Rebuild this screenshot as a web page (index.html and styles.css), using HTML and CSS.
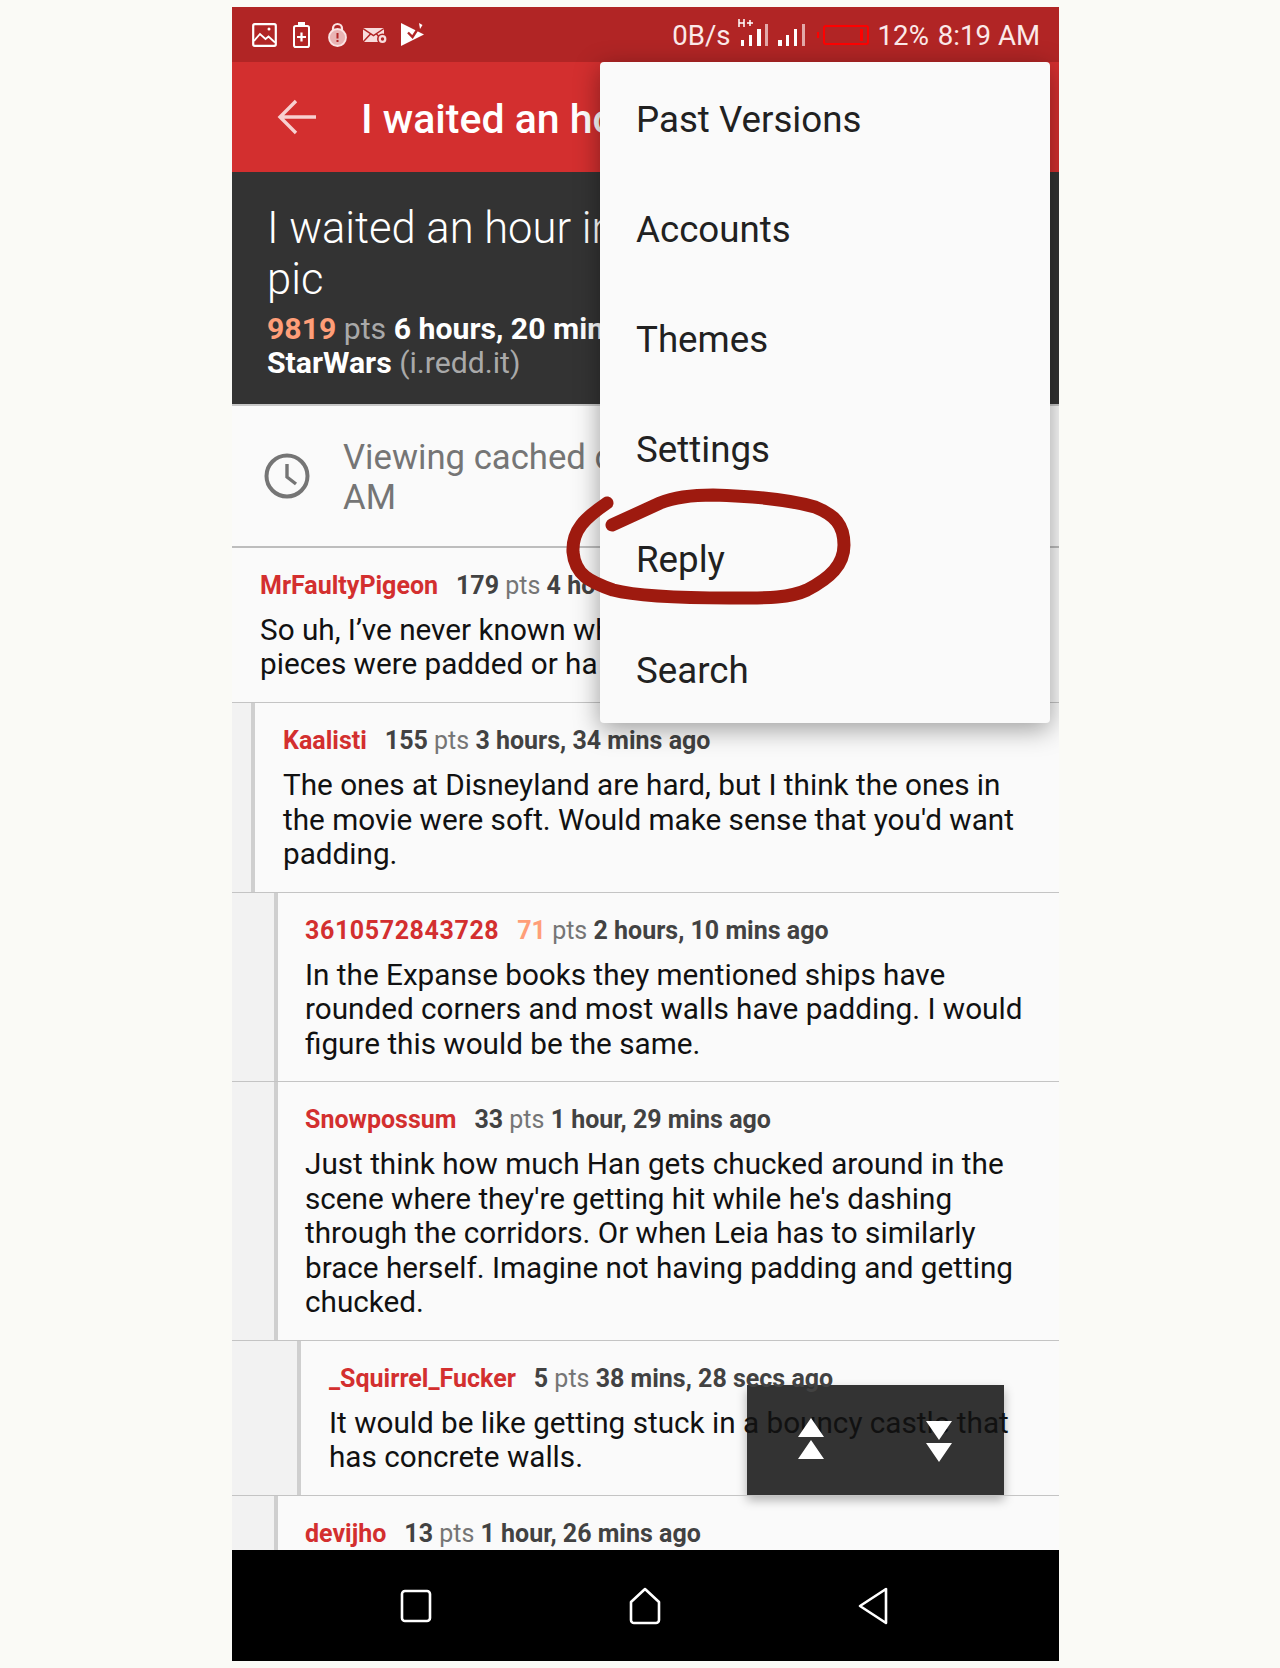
FILE: index.html
```html
<!DOCTYPE html>
<html lang="en">
<head>
<meta charset="utf-8">
<title>Reddit thread</title>
<link rel="stylesheet" href="styles.css">
</head>
<body>
<div class="phone">
  <header class="status">
    <div class="status-left">
      <svg width="25" height="24" viewBox="0 0 25 24"><rect x="1.2" y="1.2" width="22.6" height="21.6" rx="1.5" fill="none" stroke="#fff" stroke-width="2.2"/><path d="M2 18l6-7 5.500 5 3-2.500 6.500 6" fill="none" stroke="#fff" stroke-width="1.800"/><circle cx="17" cy="6" r="1.500" fill="#fff"/></svg>
      <svg width="18" height="26" viewBox="0 0 18 26"><rect x="1" y="4" width="15" height="21" rx="1.800" fill="none" stroke="#fff" stroke-width="2"/><rect x="5" y="0" width="7" height="4" fill="#fff"/><path d="M8.500 10.500v9M4 15h9" stroke="#fff" stroke-width="2.200"/></svg>
      <svg width="20" height="25" viewBox="0 0 20 25"><path d="M6 10V6.500a4.500 4.500 0 0 1 9 0V10" fill="none" stroke="#fbe3e3" stroke-width="2.200"/><circle cx="10.500" cy="15.500" r="8.500" fill="#e9b4b4" stroke="#fbe3e3" stroke-width="1.800"/><path d="M10.500 11v5.500M10.500 18v2" stroke="#b12525" stroke-width="2"/></svg>
      <svg width="24" height="16" viewBox="0 0 24 16"><path d="M0 1h21v14H0z" fill="#f8dcdc"/><path d="M0 1.500l10.500 7 10.500-7M0 15l7.500-8M21 15l-7.500-8" fill="none" stroke="#b12525" stroke-width="1.500"/><circle cx="19.500" cy="12" r="5.500" fill="#b12525"/><circle cx="19.500" cy="12" r="2.800" fill="none" stroke="#f8dcdc" stroke-width="2.200"/></svg>
      <svg class="flag" width="23" height="23" viewBox="0 0 23 23"><path d="M0 0l23 11.500L0 23z" fill="#fff"/><path d="M7 9.500l4.500 4.500L19 2.500" fill="none" stroke="#b12525" stroke-width="2.400"/><path d="M18 0l3.500 2-2.500 4z" fill="#fff"/></svg>
    </div>
    <div class="status-right">
      <span class="stat-speed">0B/s</span>
      <svg class="sig sig-h" width="31" height="27" viewBox="738 19 31 27"><path d="M739 19v8M744 19v8M739 23h5M747 23h6M750 20v6" stroke="#fff" stroke-width="1.500" fill="none"/><path d="M741 40h3v6h-3zM749 35h3v11h-3zM757 29h4v17h-4z" fill="#fff"/><path d="M765 24h3v22h-3z" fill="#e3a9a9"/></svg>
      <svg class="sig sig-b" width="28" height="22" viewBox="778 24 28 22"><path d="M778 40h4v6h-4zM786 35h3v11h-3zM794 29h3v17h-3z" fill="#fff"/><path d="M802 24h3v22h-3z" fill="#e3a9a9"/></svg>
      <svg class="batt" width="52" height="20" viewBox="817 24 52 20"><path d="M817 31h2v6h-2z" fill="#f00"/><rect x="824" y="25" width="44" height="18" rx="2" fill="none" stroke="#f00" stroke-width="2"/><path d="M860 28h3v12h-3z" fill="#f00"/></svg>
      <span class="stat-pct">12%</span>
      <span class="stat-time">8:19 AM</span>
    </div>
  </header>

  <div class="toolbar">
    <svg class="back" width="42" height="36" viewBox="0 0 42 36"><path d="M40 18H4M20 2L4 18l16 16" fill="none" stroke="#f8d0d0" stroke-width="3.4"/></svg>
    <h1 class="bar-title">I waited an hour</h1>
  </div>

  <section class="post">
    <h2 class="post-title">I waited an hour in<br>pic</h2>
    <p class="post-meta"><b class="hot">9819</b> <span class="pts">pts</span> <b>6 hours, 20 mins</b></p>
    <p class="post-meta"><b>StarWars</b> <span class="pts">(i.redd.it)</span></p>
  </section>

  <div class="cached">
    <svg class="clock" width="48" height="48" viewBox="0 0 48 48"><circle cx="24" cy="24" r="20.5" fill="none" stroke="#757575" stroke-width="4"/><path d="M24 12v13l9 7" fill="none" stroke="#757575" stroke-width="3.4"/></svg>
    <p class="cached-text">Viewing cached c<br>AM</p>
  </div>

  <main class="list">
    <div class="fab-bg"></div>

    <article class="comment">
      <div class="c-body">
        <p class="meta"><b class="user">MrFaultyPigeon</b><b class="score">179</b> <span class="pts">pts</span> <b>4 ho</b></p>
        <p class="text">So uh, I’ve never known wh<br>pieces were padded or ha</p>
      </div>
    </article>

    <article class="comment l1">
      <div class="gutter"></div>
      <div class="c-body">
        <p class="meta"><b class="user">Kaalisti</b><b class="score">155</b> <span class="pts">pts</span> <b>3 hours, 34 mins ago</b></p>
        <p class="text">The ones at Disneyland are hard, but I think the ones in the movie were soft. Would make sense that you'd want padding.</p>
      </div>
    </article>

    <article class="comment l2">
      <div class="gutter"></div>
      <div class="c-body">
        <p class="meta"><b class="user digits">3610572843728</b><b class="score hot">71</b> <span class="pts">pts</span> <b>2 hours, 10 mins ago</b></p>
        <p class="text">In the Expanse books they mentioned ships have rounded corners and most walls have padding. I would figure this would be the same.</p>
      </div>
    </article>

    <article class="comment l2">
      <div class="gutter"></div>
      <div class="c-body">
        <p class="meta"><b class="user">Snowpossum</b><b class="score">33</b> <span class="pts">pts</span> <b>1 hour, 29 mins ago</b></p>
        <p class="text">Just think how much Han gets chucked around in the scene where they're getting hit while he's dashing through the corridors. Or when Leia has to similarly brace herself. Imagine not having padding and getting chucked.</p>
      </div>
    </article>

    <article class="comment l3">
      <div class="gutter"></div>
      <div class="c-body">
        <p class="meta"><b class="user">_Squirrel_Fucker</b><b class="score">5</b> <span class="pts">pts</span> <b>38 mins, 28 secs ago</b></p>
        <p class="text">It would be like getting stuck in a bouncy castle that has concrete walls.</p>
      </div>
    </article>

    <article class="comment l2">
      <div class="gutter"></div>
      <div class="c-body">
        <p class="meta"><b class="user">devijho</b><b class="score">13</b> <span class="pts">pts</span> <b>1 hour, 26 mins ago</b></p>
      </div>
    </article>

    <div class="fab-icons">
      <svg width="28" height="42" viewBox="0 0 28 42"><path d="M14 0l13 19H1zM14 22l13 19H1z" fill="#fff"/></svg>
      <svg width="28" height="42" viewBox="0 0 28 42"><path d="M1 1h26L14 20zM1 23h26L14 42z" fill="#fff"/></svg>
    </div>
  </main>

  <nav class="navbar">
    <svg width="32" height="34" viewBox="0 0 32 34"><rect x="2" y="2" width="28" height="30" rx="3" fill="none" stroke="#fff" stroke-width="2.6"/></svg>
    <svg width="32" height="38" viewBox="0 0 32 38"><path d="M2 15L16 2l14 13v18a3 3 0 0 1-3 3H5a3 3 0 0 1-3-3z" fill="none" stroke="#fff" stroke-width="2.6" stroke-linejoin="round"/></svg>
    <svg width="32" height="38" viewBox="0 0 32 38"><path d="M29 2v34L3 19z" fill="none" stroke="#fff" stroke-width="2.6" stroke-linejoin="round"/></svg>
  </nav>

  <ul class="menu">
    <li>Past Versions</li>
    <li>Accounts</li>
    <li>Themes</li>
    <li>Settings</li>
    <li>Reply</li>
    <li>Search</li>
  </ul>

  <svg class="scribble" width="827" height="1654" viewBox="232 7 827 1654"><path d="M607 503C585 518 572 530 573 552C575 575 590 582 613 590C640 597 690 598 730 598C770 598 790 598 807 590C830 578 844 565 844 545C844 525 835 515 815 507C790 500 750 496 713 495C690 495 675 497 660 503L612 525" fill="none" stroke="#9e1a0f" stroke-width="13" stroke-linecap="round"/></svg>
</div>
</body>
</html>
```

FILE: styles.css
```css
* { box-sizing: border-box; }
html, body { margin: 0; padding: 0; }
body {
  background: #fafaf6;
  font-family: Roboto, "Noto Sans", sans-serif;
  height: 1668px;
  overflow: hidden;
}
p, h1, h2, ul { margin: 0; padding: 0; }
b { font-weight: 500; }

.phone {
  position: relative;
  width: 827px;
  height: 1654px;
  margin: 7px 0 0 232px;
  display: flex;
  flex-direction: column;
  background: #fafafa;
  overflow: hidden;
}

/* status bar */
.status {
  height: 55px;
  flex: none;
  background: #b12525;
  color: #fbe9e9;
  display: flex;
  align-items: center;
  justify-content: space-between;
  padding: 0 19px 0 20px;
  font-size: 27.6px;
}
.status-left { display: flex; align-items: center; gap: 16px; }
.status-left svg, .status-right svg { display: block; }
.flag { margin-left: -2px; }
.status-right { display: flex; align-items: center; }
.status-right span { padding-top: 2px; }
.sig-h { margin: -5px 0 0 7px; }
.sig-b { margin-left: 9px; }
.batt { margin-left: 11px; }
.stat-pct { margin-left: 9px; }
.stat-time { margin-left: 9px; }

/* toolbar */
.toolbar {
  height: 110px;
  flex: none;
  background: #d32f2f;
  display: flex;
  align-items: center;
  padding: 0 0 0 44px;
  gap: 43px;
  overflow: hidden;
}
.bar-title {
  color: #fff;
  font-size: 41px;
  font-weight: 500;
  white-space: nowrap;
  padding-top: 4px;
}

/* post header */
.post {
  height: 232px;
  flex: none;
  background: #333;
  color: #fff;
  padding: 31px 29px 0 35px;
}
.post-title {
  font-size: 43.5px;
  font-weight: 300;
  line-height: 51px;
  margin-bottom: 7px;
}
.post-meta {
  font-size: 30.2px;
  line-height: 34px;
}
.post-meta b { font-weight: 700; }
.post-meta .pts { color: #a9a9a9; }
.post-meta .hot { color: #ff9e78; }

/* cached notice */
.cached {
  height: 144px;
  flex: none;
  background: #fafafa;
  border-top: 2px solid #c8c8c8;
  border-bottom: 2px solid #bdbdbd;
  display: flex;
  align-items: center;
  padding-left: 31px;
  gap: 32px;
}
.cached-text {
  font-size: 34.7px;
  line-height: 40px;
  color: #757575;
  white-space: nowrap;
  padding-top: 2px;
}

/* comments */
.list {
  position: relative;
  flex: 1;
  min-height: 0;
  overflow: hidden;
}
.comment {
  position: relative;
  z-index: 1;
  display: flex;
  border-bottom: 1px solid #c4c4c4;
}
.gutter {
  flex: none;
  background: #f2f2f2;
  border-right: 4px solid #cfcfcf;
}
.l1 .gutter { width: 23px; }
.l2 .gutter { width: 46px; }
.l3 .gutter { width: 69px; }
.c-body {
  flex: 1;
  min-width: 0;
  padding: 21px 26px 20.4px 28px;
}
.l2 .c-body { padding-left: 27px; }
.meta {
  font-size: 25px;
  line-height: 34px;
  color: #424242;
  margin-bottom: 10px;
  white-space: nowrap;
}
.meta b { font-weight: 700; }
.user { color: #d32f2f; margin-right: 18px; }
.digits { letter-spacing: 0.6px; }
.score { color: #424242; }
.score.hot { color: #ff9e78; }
.pts { color: #757575; }
.text {
  font-size: 29.7px;
  line-height: 34.4px;
  color: #111;
}

.fab-bg {
  position: absolute;
  left: 515px;
  top: 837px;
  width: 257px;
  height: 110px;
  background: #333;
  box-shadow: 0 5px 10px rgba(0, 0, 0, 0.3);
}
.fab-icons {
  position: absolute;
  z-index: 2;
  left: 515px;
  top: 870px;
  width: 257px;
  padding: 0 51px 0 50px;
  display: flex;
  justify-content: space-between;
}
.fab-icons svg { display: block; }
.fab-icons svg + svg { margin-top: 2px; }

/* nav */
.navbar {
  height: 111px;
  flex: none;
  background: #000;
  position: relative;
  z-index: 3;
  display: flex;
  align-items: center;
  padding: 0 170px 0 168px;
  justify-content: space-between;
}

/* overflow menu */
.menu {
  position: absolute;
  z-index: 4;
  left: 368px;
  top: 55px;
  width: 450px;
  height: 661px;
  list-style: none;
  background: #fafafa;
  border-radius: 4px;
  box-shadow: 0 6px 26px rgba(0, 0, 0, 0.38);
}
.menu li {
  height: 110.2px;
  display: flex;
  align-items: center;
  padding: 4px 0 0 36px;
  font-size: 36.7px;
  color: #212121;
}

.scribble {
  position: absolute;
  z-index: 5;
  left: 0;
  top: 0;
  pointer-events: none;
}
```
